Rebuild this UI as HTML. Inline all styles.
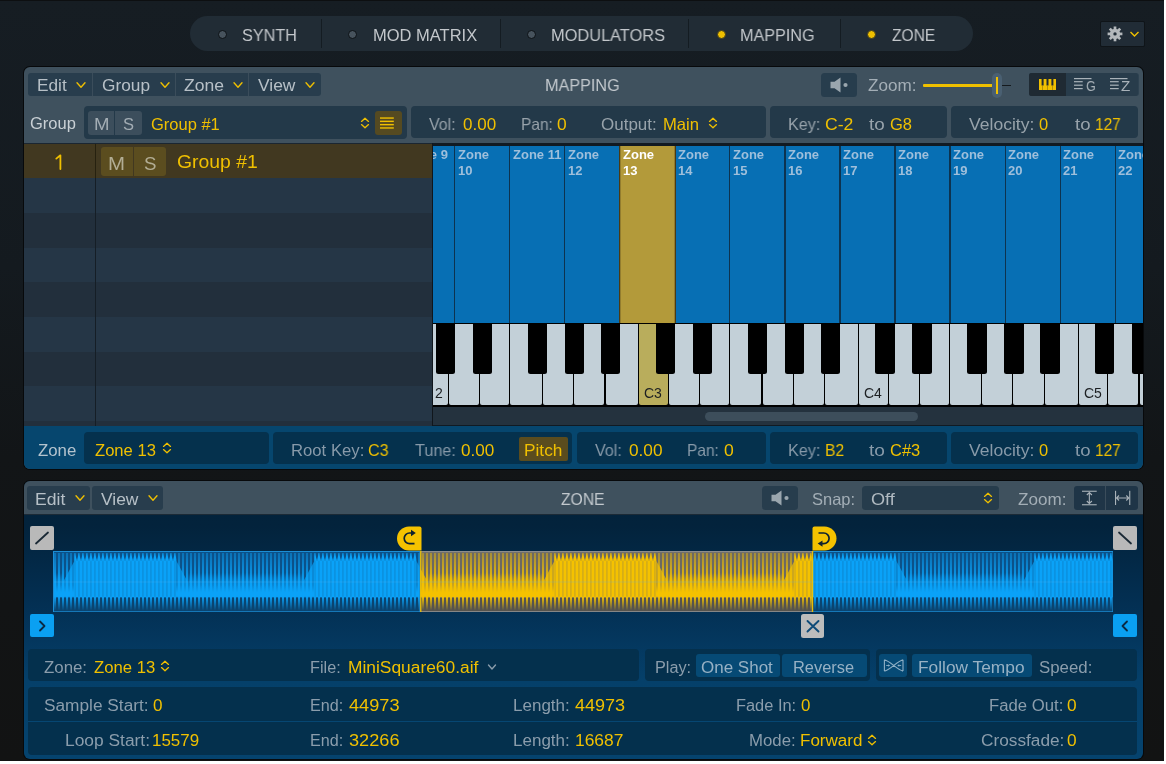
<!DOCTYPE html>
<html><head><meta charset="utf-8"><style>
html,body{margin:0;padding:0;}
body{width:1166px;height:764px;position:relative;overflow:hidden;background:#131313;font-family:"Liberation Sans",sans-serif;}
.t{position:absolute;white-space:nowrap;will-change:transform;}
</style></head><body>
<div style="position:absolute;left:0;top:0;width:1164px;height:761px;background:linear-gradient(180deg,#161d23 0%,#141a1f 35%,#121517 60%,#121313 100%)"></div>
<div style="position:absolute;left:0.00px;top:0.00px;width:1164.00px;height:1.00px;background:#0d0f11;border-radius:0px;"></div>
<div style="position:absolute;left:190.00px;top:16.00px;width:783.00px;height:35.00px;background:#212c35;border-radius:17.5px;"></div>
<div style="position:absolute;left:321.00px;top:19.00px;width:1.00px;height:29.00px;background:#141c22;border-radius:0px;"></div>
<div style="position:absolute;left:500.00px;top:19.00px;width:1.00px;height:29.00px;background:#141c22;border-radius:0px;"></div>
<div style="position:absolute;left:688.00px;top:19.00px;width:1.00px;height:29.00px;background:#141c22;border-radius:0px;"></div>
<div style="position:absolute;left:840.00px;top:19.00px;width:1.00px;height:29.00px;background:#141c22;border-radius:0px;"></div>
<div style="position:absolute;left:218.0px;top:29.5px;width:9px;height:9px;border-radius:50%;background:#47535d;box-sizing:border-box;border:1px solid #0c1115"></div>
<div style="position:absolute;left:348.1px;top:29.5px;width:9px;height:9px;border-radius:50%;background:#47535d;box-sizing:border-box;border:1px solid #0c1115"></div>
<div style="position:absolute;left:526.5px;top:29.5px;width:9px;height:9px;border-radius:50%;background:#47535d;box-sizing:border-box;border:1px solid #0c1115"></div>
<div style="position:absolute;left:716.5px;top:29.5px;width:9px;height:9px;border-radius:50%;background:#f0c000;box-sizing:border-box;border:1px solid #3a3a20"></div>
<div style="position:absolute;left:866.5px;top:29.5px;width:9px;height:9px;border-radius:50%;background:#f0c000;box-sizing:border-box;border:1px solid #3a3a20"></div>
<div class="t" style="left:241.70px;top:27.00px;font-size:16.5px;line-height:16.5px;color:#c3c7cb;font-weight:400;transform:scaleX(0.9821);transform-origin:0 0;">SYNTH</div>
<div class="t" style="left:373.00px;top:27.00px;font-size:16.5px;line-height:16.5px;color:#c3c7cb;font-weight:400;">MOD MATRIX</div>
<div class="t" style="left:551.00px;top:27.00px;font-size:16.5px;line-height:16.5px;color:#c3c7cb;font-weight:400;transform:scaleX(0.9922);transform-origin:0 0;">MODULATORS</div>
<div class="t" style="left:740.00px;top:27.00px;font-size:16.5px;line-height:16.5px;color:#c3c7cb;font-weight:400;transform:scaleX(0.9803);transform-origin:0 0;">MAPPING</div>
<div class="t" style="left:891.70px;top:27.00px;font-size:16.5px;line-height:16.5px;color:#c3c7cb;font-weight:400;transform:scaleX(0.9444);transform-origin:0 0;">ZONE</div>
<div style="position:absolute;left:1100.00px;top:21.00px;width:45.00px;height:26.00px;background:#0f1418;border-radius:2px;"></div>
<div style="position:absolute;left:1101.00px;top:22.00px;width:43.00px;height:24.00px;background:#212c36;border-radius:1px;"></div>
<svg style="position:absolute;left:1105.0px;top:23.5px;" width="20" height="20" viewBox="0 0 20 20"><g transform="translate(10,9.9)" fill="#b4b8bc"><circle r="5.2"/><rect x="-1.35" y="-7.4" width="2.7" height="4" transform="rotate(0)"/><rect x="-1.35" y="-7.4" width="2.7" height="4" transform="rotate(45)"/><rect x="-1.35" y="-7.4" width="2.7" height="4" transform="rotate(90)"/><rect x="-1.35" y="-7.4" width="2.7" height="4" transform="rotate(135)"/><rect x="-1.35" y="-7.4" width="2.7" height="4" transform="rotate(180)"/><rect x="-1.35" y="-7.4" width="2.7" height="4" transform="rotate(225)"/><rect x="-1.35" y="-7.4" width="2.7" height="4" transform="rotate(270)"/><rect x="-1.35" y="-7.4" width="2.7" height="4" transform="rotate(315)"/></g><circle cx="10" cy="9.9" r="1.7" fill="#212c36"/></svg>
<svg style="position:absolute;left:1128.0px;top:28.0px;" width="14" height="12" viewBox="0 0 14 12"><path d="M2.5 4 L6.5 8 L10.5 4" stroke="#f0c000" stroke-width="1.4" fill="none"/></svg>
<div style="position:absolute;left:23.00px;top:66.00px;width:1121.00px;height:403.50px;background:#07090b;border-radius:7px;"></div>
<div style="position:absolute;left:24.00px;top:67.00px;width:1119.00px;height:401.50px;background:#3f515e;border-radius:6px;overflow:hidden"></div>
<div style="position:absolute;left:28.00px;top:73.00px;width:292.50px;height:23.00px;background:#283d4d;border-radius:3px;"></div>
<div style="position:absolute;left:92.00px;top:73.00px;width:1.00px;height:23.00px;background:#3b4d5b;border-radius:0px;"></div>
<div style="position:absolute;left:174.50px;top:73.00px;width:1.00px;height:23.00px;background:#3b4d5b;border-radius:0px;"></div>
<div style="position:absolute;left:247.50px;top:73.00px;width:1.00px;height:23.00px;background:#3b4d5b;border-radius:0px;"></div>
<div class="t" style="left:36.80px;top:77.00px;font-size:17px;line-height:17px;color:#b7c0c7;font-weight:400;transform:scaleX(1.0137);transform-origin:0 0;">Edit</div>
<div class="t" style="left:102.00px;top:77.00px;font-size:17px;line-height:17px;color:#b7c0c7;font-weight:400;transform:scaleX(1.0159);transform-origin:0 0;">Group</div>
<div class="t" style="left:184.00px;top:77.00px;font-size:17px;line-height:17px;color:#b7c0c7;font-weight:400;transform:scaleX(1.0323);transform-origin:0 0;">Zone</div>
<div class="t" style="left:257.50px;top:77.00px;font-size:17px;line-height:17px;color:#b7c0c7;font-weight:400;transform:scaleX(1.0246);transform-origin:0 0;">View</div>
<svg style="position:absolute;left:75.0px;top:80.0px;" width="12" height="10" viewBox="0 0 12 10"><path d="M2.0 2.75 L6 7.25 L10.0 2.75" stroke="#f0c000" stroke-width="1.35" fill="none" stroke-linecap="round" stroke-linejoin="round"/></svg>
<svg style="position:absolute;left:158.5px;top:80.0px;" width="12" height="10" viewBox="0 0 12 10"><path d="M2.0 2.75 L6 7.25 L10.0 2.75" stroke="#f0c000" stroke-width="1.35" fill="none" stroke-linecap="round" stroke-linejoin="round"/></svg>
<svg style="position:absolute;left:232.0px;top:80.0px;" width="12" height="10" viewBox="0 0 12 10"><path d="M2.0 2.75 L6 7.25 L10.0 2.75" stroke="#f0c000" stroke-width="1.35" fill="none" stroke-linecap="round" stroke-linejoin="round"/></svg>
<svg style="position:absolute;left:304.0px;top:80.0px;" width="12" height="10" viewBox="0 0 12 10"><path d="M2.0 2.75 L6 7.25 L10.0 2.75" stroke="#f0c000" stroke-width="1.35" fill="none" stroke-linecap="round" stroke-linejoin="round"/></svg>
<div class="t" style="left:545.30px;top:77.00px;font-size:16.5px;line-height:16.5px;color:#c3c9ce;font-weight:400;transform:scaleX(0.9816);transform-origin:0 0;">MAPPING</div>
<div style="position:absolute;left:821.00px;top:72.50px;width:35.50px;height:24.00px;background:#273d4d;border-radius:3.5px;"></div>
<svg style="position:absolute;left:828.5px;top:76.5px;" width="20" height="16" viewBox="0 0 20 16"><path d="M1.5 4.8 H5.5 L11.5 0.5 V15.5 L5.5 11.2 H1.5 Z" fill="#9aa6ae"/><circle cx="16.5" cy="8" r="2.1" fill="#9aa6ae"/></svg>
<div class="t" style="left:868.30px;top:77.00px;font-size:16.5px;line-height:16.5px;color:#a3aeb6;font-weight:400;transform:scaleX(1.0353);transform-origin:0 0;">Zoom:</div>
<div style="position:absolute;left:923.00px;top:84.30px;width:74.00px;height:2.50px;background:#f0c000;border-radius:1px;"></div>
<div style="position:absolute;left:997.00px;top:84.90px;width:14.00px;height:1.30px;background:#151a1e;border-radius:0px;"></div>
<div style="position:absolute;left:991.50px;top:73.00px;width:10.50px;height:25.00px;background:#4a6072;border-radius:5px;"></div>
<div style="position:absolute;left:995.80px;top:76.50px;width:2.00px;height:17.50px;background:#f0c000;border-radius:0px;"></div>
<div style="position:absolute;left:1029.00px;top:72.50px;width:110.00px;height:23.50px;background:#2e4251;border-radius:3px;"></div>
<div style="position:absolute;left:1029.00px;top:72.50px;width:36.50px;height:23.50px;background:#1f2a33;border-radius:3px;"></div>
<div style="position:absolute;left:1065.00px;top:72.50px;width:1.00px;height:23.50px;background:#263543;border-radius:0px;"></div>
<div style="position:absolute;left:1101.50px;top:72.50px;width:1.00px;height:23.50px;background:#3b4d5b;border-radius:0px;"></div>
<div style="position:absolute;left:1029.00px;top:72.50px;width:109.00px;height:23.50px;background:#283c4b;border-radius:3px;"></div>
<div style="position:absolute;left:1029.00px;top:72.50px;width:37.00px;height:23.50px;background:#1f2a33;border-radius:3px;border-top-right-radius:0;border-bottom-right-radius:0"></div>
<svg style="position:absolute;left:1039.0px;top:79.0px;" width="17" height="11" viewBox="0 0 17 11"><rect x="0" y="0" width="17" height="11" fill="#f0c000"/><rect x="2.6" y="0" width="2" height="6.5" fill="#1f2a33"/><rect x="7.5" y="0" width="2" height="6.5" fill="#1f2a33"/><rect x="12.4" y="0" width="2" height="6.5" fill="#1f2a33"/><rect x="3.4" y="6.5" width="0.6" height="4.5" fill="#8a7410"/><rect x="8.2" y="6.5" width="0.6" height="4.5" fill="#8a7410"/><rect x="13.1" y="6.5" width="0.6" height="4.5" fill="#8a7410"/></svg>
<svg style="position:absolute;left:1073.9px;top:77.7px;" width="20" height="12" viewBox="0 0 20 12"><rect x="0" y="0" width="17.5" height="1.2" fill="#a9b2b9"/><rect x="0" y="3.1" width="8.7" height="1.2" fill="#a9b2b9"/><rect x="0" y="6.6" width="8.7" height="1.2" fill="#a9b2b9"/><rect x="0" y="10" width="8.7" height="1.2" fill="#a9b2b9"/></svg>
<div class="t" style="left:1085.50px;top:79.00px;font-size:14px;line-height:14px;color:#a9b2b9;font-weight:400;transform:scaleX(0.8991);transform-origin:0 0;">G</div>
<svg style="position:absolute;left:1109.9px;top:77.7px;" width="20" height="12" viewBox="0 0 20 12"><rect x="0" y="0" width="17.5" height="1.2" fill="#a9b2b9"/><rect x="0" y="3.1" width="8.7" height="1.2" fill="#a9b2b9"/><rect x="0" y="6.6" width="8.7" height="1.2" fill="#a9b2b9"/><rect x="0" y="10" width="8.7" height="1.2" fill="#a9b2b9"/></svg>
<div class="t" style="left:1120.70px;top:79.00px;font-size:14px;line-height:14px;color:#a9b2b9;font-weight:400;transform:scaleX(1.0877);transform-origin:0 0;">Z</div>
<div class="t" style="left:30.00px;top:115.00px;font-size:16.5px;line-height:16.5px;color:#c9d0d5;font-weight:400;">Group</div>
<div style="position:absolute;left:84.00px;top:106.00px;width:323.00px;height:32.60px;background:#233949;border-radius:4px;"></div>
<div style="position:absolute;left:88.00px;top:111.00px;width:26.00px;height:24.00px;background:#3c4e5c;border-radius:3px;border-top-right-radius:0;border-bottom-right-radius:0"></div>
<div style="position:absolute;left:115.00px;top:111.00px;width:27.00px;height:24.00px;background:#3c4e5c;border-radius:3px;border-top-left-radius:0;border-bottom-left-radius:0"></div>
<div class="t" style="left:93.50px;top:116.00px;font-size:16.5px;line-height:16.5px;color:#a3adb4;font-weight:400;transform:scaleX(1.1273);transform-origin:0 0;">M</div>
<div class="t" style="left:123.00px;top:116.00px;font-size:16.5px;line-height:16.5px;color:#a3adb4;font-weight:400;">S</div>
<div class="t" style="left:151.00px;top:116.00px;font-size:16.5px;line-height:16.5px;color:#f0c000;font-weight:400;">Group #1</div>
<svg style="position:absolute;left:358.7px;top:115.0px;" width="12" height="16" viewBox="0 0 12 16"><path d="M2.5 6.4 L6 3.2 L9.5 6.4 M2.5 9.6 L6 12.8 L9.5 9.6" stroke="#f0c000" stroke-width="1.3" fill="none" stroke-linecap="round" stroke-linejoin="round"/></svg>
<div style="position:absolute;left:375.30px;top:110.80px;width:26.70px;height:24.00px;background:#554a21;border-radius:3px;"></div>
<svg style="position:absolute;left:380.2px;top:116.0px;" width="14" height="14" viewBox="0 0 14 14"><rect x="0" y="1.35" width="13.8" height="1.4" fill="#f0c000"/><rect x="0" y="4.65" width="13.8" height="1.4" fill="#f0c000"/><rect x="0" y="7.95" width="13.8" height="1.4" fill="#f0c000"/><rect x="0" y="11.25" width="13.8" height="1.4" fill="#f0c000"/></svg>
<div style="position:absolute;left:411.00px;top:106.00px;width:355.00px;height:32.20px;background:#233949;border-radius:4px;"></div>
<div class="t" style="left:428.90px;top:116.00px;font-size:16.5px;line-height:16.5px;color:#98a3ab;font-weight:400;transform:scaleX(0.9673);transform-origin:0 0;">Vol:</div>
<div class="t" style="left:462.50px;top:116.00px;font-size:16.5px;line-height:16.5px;color:#f0c000;font-weight:400;transform:scaleX(1.0312);transform-origin:0 0;">0.00</div>
<div class="t" style="left:520.60px;top:116.00px;font-size:16.5px;line-height:16.5px;color:#98a3ab;font-weight:400;transform:scaleX(0.9396);transform-origin:0 0;">Pan:</div>
<div class="t" style="left:557.30px;top:116.00px;font-size:16.5px;line-height:16.5px;color:#f0c000;font-weight:400;transform:scaleX(1.0543);transform-origin:0 0;">0</div>
<div class="t" style="left:600.80px;top:116.00px;font-size:16.5px;line-height:16.5px;color:#98a3ab;font-weight:400;transform:scaleX(1.0296);transform-origin:0 0;">Output:</div>
<div class="t" style="left:663.00px;top:116.00px;font-size:16.5px;line-height:16.5px;color:#f0c000;font-weight:400;transform:scaleX(1.0070);transform-origin:0 0;">Main</div>
<svg style="position:absolute;left:707.0px;top:115.0px;" width="12" height="16" viewBox="0 0 12 16"><path d="M2.5 6.4 L6 3.2 L9.5 6.4 M2.5 9.6 L6 12.8 L9.5 9.6" stroke="#f0c000" stroke-width="1.3" fill="none" stroke-linecap="round" stroke-linejoin="round"/></svg>
<div style="position:absolute;left:770.00px;top:106.00px;width:177.00px;height:32.20px;background:#233949;border-radius:4px;"></div>
<div class="t" style="left:787.80px;top:116.00px;font-size:16.5px;line-height:16.5px;color:#98a3ab;font-weight:400;transform:scaleX(0.9758);transform-origin:0 0;">Key:</div>
<div class="t" style="left:825.00px;top:116.00px;font-size:16.5px;line-height:16.5px;color:#f0c000;font-weight:400;transform:scaleX(1.0677);transform-origin:0 0;">C-2</div>
<div class="t" style="left:868.80px;top:116.00px;font-size:16.5px;line-height:16.5px;color:#98a3ab;font-weight:400;transform:scaleX(1.1418);transform-origin:0 0;">to</div>
<div class="t" style="left:890.40px;top:116.00px;font-size:16.5px;line-height:16.5px;color:#f0c000;font-weight:400;transform:scaleX(0.9818);transform-origin:0 0;">G8</div>
<div style="position:absolute;left:951.00px;top:106.00px;width:187.20px;height:32.20px;background:#233949;border-radius:4px;"></div>
<div class="t" style="left:968.70px;top:116.00px;font-size:16.5px;line-height:16.5px;color:#98a3ab;font-weight:400;transform:scaleX(1.0627);transform-origin:0 0;">Velocity:</div>
<div class="t" style="left:1039.30px;top:116.00px;font-size:16.5px;line-height:16.5px;color:#f0c000;font-weight:400;">0</div>
<div class="t" style="left:1075.00px;top:116.00px;font-size:16.5px;line-height:16.5px;color:#98a3ab;font-weight:400;transform:scaleX(1.1273);transform-origin:0 0;">to</div>
<div class="t" style="left:1095.00px;top:116.00px;font-size:16.5px;line-height:16.5px;color:#f0c000;font-weight:400;transform:scaleX(0.9365);transform-origin:0 0;">127</div>
<div style="position:absolute;left:24.00px;top:143.00px;width:1119.00px;height:1.00px;background:#1b2631;border-radius:0px;"></div>
<div style="position:absolute;left:24.00px;top:177.50px;width:408.50px;height:35.00px;background:#253646;border-radius:0px;"></div>
<div style="position:absolute;left:24.00px;top:212.50px;width:408.50px;height:35.10px;background:#222f3c;border-radius:0px;"></div>
<div style="position:absolute;left:24.00px;top:247.60px;width:408.50px;height:34.60px;background:#253646;border-radius:0px;"></div>
<div style="position:absolute;left:24.00px;top:282.20px;width:408.50px;height:34.80px;background:#222f3c;border-radius:0px;"></div>
<div style="position:absolute;left:24.00px;top:317.00px;width:408.50px;height:35.00px;background:#253646;border-radius:0px;"></div>
<div style="position:absolute;left:24.00px;top:352.00px;width:408.50px;height:34.00px;background:#222f3c;border-radius:0px;"></div>
<div style="position:absolute;left:24.00px;top:386.00px;width:408.50px;height:35.00px;background:#253646;border-radius:0px;"></div>
<div style="position:absolute;left:24.00px;top:421.00px;width:408.50px;height:5.00px;background:#222f3c;border-radius:0px;"></div>
<div style="position:absolute;left:24.00px;top:144.00px;width:408.50px;height:33.50px;background:#413820;border-radius:0px;"></div>
<div style="position:absolute;left:95.00px;top:144.00px;width:1.20px;height:282.00px;background:#151e26;border-radius:0px;"></div>
<div style="position:absolute;left:95.00px;top:144.00px;width:1.20px;height:33.50px;background:#26210f;border-radius:0px;"></div>
<svg style="position:absolute;left:50.0px;top:150.0px;" width="20" height="22" viewBox="0 0 20 22"><path d="M10.4 19 V5.3 L6.3 8.6" stroke="#f0c000" stroke-width="1.8" fill="none" stroke-linejoin="round" stroke-linecap="round"/></svg>
<div style="position:absolute;left:101.00px;top:147.40px;width:32.00px;height:28.60px;background:#5b4d1f;border-radius:3px;border-top-right-radius:0;border-bottom-right-radius:0"></div>
<div style="position:absolute;left:134.00px;top:147.40px;width:32.00px;height:28.60px;background:#5b4d1f;border-radius:3px;border-top-left-radius:0;border-bottom-left-radius:0"></div>
<div class="t" style="left:107.50px;top:155.00px;font-size:18.5px;line-height:18.5px;color:#b2ad94;font-weight:400;transform:scaleX(1.1039);transform-origin:0 0;">M</div>
<div class="t" style="left:144.00px;top:155.00px;font-size:18.5px;line-height:18.5px;color:#b2ad94;font-weight:400;transform:scaleX(1.0121);transform-origin:0 0;">S</div>
<div class="t" style="left:176.70px;top:153.00px;font-size:18.5px;line-height:18.5px;color:#f0c000;font-weight:400;transform:scaleX(1.0473);transform-origin:0 0;">Group #1</div>
<div style="position:absolute;left:432.50px;top:143.00px;width:710.50px;height:283.00px;background:#111a22;border-radius:0px;"></div>
<div style="position:absolute;left:432.50px;top:145.50px;width:710.50px;height:177.10px;overflow:hidden;"><div style="position:absolute;left:0.00px;top:0.00px;width:710.50px;height:177.10px;background:#076fb4;border-radius:0px;"></div><div style="position:absolute;left:21.80px;top:0.00px;width:1.10px;height:177.10px;background:#0d3350;border-radius:0px;"></div><div style="position:absolute;left:76.82px;top:0.00px;width:1.10px;height:177.10px;background:#0d3350;border-radius:0px;"></div><div style="position:absolute;left:131.84px;top:0.00px;width:1.10px;height:177.10px;background:#0d3350;border-radius:0px;"></div><div style="position:absolute;left:186.86px;top:0.00px;width:1.10px;height:177.10px;background:#0d3350;border-radius:0px;"></div><div style="position:absolute;left:241.88px;top:0.00px;width:1.10px;height:177.10px;background:#0d3350;border-radius:0px;"></div><div style="position:absolute;left:296.90px;top:0.00px;width:1.10px;height:177.10px;background:#0d3350;border-radius:0px;"></div><div style="position:absolute;left:351.92px;top:0.00px;width:1.10px;height:177.10px;background:#0d3350;border-radius:0px;"></div><div style="position:absolute;left:406.94px;top:0.00px;width:1.10px;height:177.10px;background:#0d3350;border-radius:0px;"></div><div style="position:absolute;left:461.96px;top:0.00px;width:1.10px;height:177.10px;background:#0d3350;border-radius:0px;"></div><div style="position:absolute;left:516.98px;top:0.00px;width:1.10px;height:177.10px;background:#0d3350;border-radius:0px;"></div><div style="position:absolute;left:572.00px;top:0.00px;width:1.10px;height:177.10px;background:#0d3350;border-radius:0px;"></div><div style="position:absolute;left:627.02px;top:0.00px;width:1.10px;height:177.10px;background:#0d3350;border-radius:0px;"></div><div style="position:absolute;left:682.04px;top:0.00px;width:1.10px;height:177.10px;background:#0d3350;border-radius:0px;"></div><div style="position:absolute;left:186.76px;top:0.00px;width:56.32px;height:177.10px;background:#b39a3a;border-radius:0px;box-shadow:inset 1.3px 0 0 #4a3a14, inset -1.3px 0 0 #4a3a14"></div><div class="t" style="left:-26.30px;top:2.50px;font-size:13px;line-height:13px;color:#9fbfdb;font-weight:700;">Zone 9</div><div class="t" style="left:25.60px;top:2.50px;font-size:13px;line-height:13px;color:#9fbfdb;font-weight:700;">Zone</div><div class="t" style="left:25.60px;top:18.50px;font-size:13px;line-height:13px;color:#9fbfdb;font-weight:700;">10</div><div class="t" style="left:80.62px;top:2.50px;font-size:13px;line-height:13px;color:#9fbfdb;font-weight:700;">Zone 11</div><div class="t" style="left:135.64px;top:2.50px;font-size:13px;line-height:13px;color:#9fbfdb;font-weight:700;">Zone</div><div class="t" style="left:135.64px;top:18.50px;font-size:13px;line-height:13px;color:#9fbfdb;font-weight:700;">12</div><div class="t" style="left:190.66px;top:2.50px;font-size:13px;line-height:13px;color:#ffffff;font-weight:700;">Zone</div><div class="t" style="left:190.66px;top:18.50px;font-size:13px;line-height:13px;color:#ffffff;font-weight:700;">13</div><div class="t" style="left:245.68px;top:2.50px;font-size:13px;line-height:13px;color:#9fbfdb;font-weight:700;">Zone</div><div class="t" style="left:245.68px;top:18.50px;font-size:13px;line-height:13px;color:#9fbfdb;font-weight:700;">14</div><div class="t" style="left:300.70px;top:2.50px;font-size:13px;line-height:13px;color:#9fbfdb;font-weight:700;">Zone</div><div class="t" style="left:300.70px;top:18.50px;font-size:13px;line-height:13px;color:#9fbfdb;font-weight:700;">15</div><div class="t" style="left:355.72px;top:2.50px;font-size:13px;line-height:13px;color:#9fbfdb;font-weight:700;">Zone</div><div class="t" style="left:355.72px;top:18.50px;font-size:13px;line-height:13px;color:#9fbfdb;font-weight:700;">16</div><div class="t" style="left:410.74px;top:2.50px;font-size:13px;line-height:13px;color:#9fbfdb;font-weight:700;">Zone</div><div class="t" style="left:410.74px;top:18.50px;font-size:13px;line-height:13px;color:#9fbfdb;font-weight:700;">17</div><div class="t" style="left:465.76px;top:2.50px;font-size:13px;line-height:13px;color:#9fbfdb;font-weight:700;">Zone</div><div class="t" style="left:465.76px;top:18.50px;font-size:13px;line-height:13px;color:#9fbfdb;font-weight:700;">18</div><div class="t" style="left:520.78px;top:2.50px;font-size:13px;line-height:13px;color:#9fbfdb;font-weight:700;">Zone</div><div class="t" style="left:520.78px;top:18.50px;font-size:13px;line-height:13px;color:#9fbfdb;font-weight:700;">19</div><div class="t" style="left:575.80px;top:2.50px;font-size:13px;line-height:13px;color:#9fbfdb;font-weight:700;">Zone</div><div class="t" style="left:575.80px;top:18.50px;font-size:13px;line-height:13px;color:#9fbfdb;font-weight:700;">20</div><div class="t" style="left:630.82px;top:2.50px;font-size:13px;line-height:13px;color:#9fbfdb;font-weight:700;">Zone</div><div class="t" style="left:630.82px;top:18.50px;font-size:13px;line-height:13px;color:#9fbfdb;font-weight:700;">21</div><div class="t" style="left:685.84px;top:2.50px;font-size:13px;line-height:13px;color:#9fbfdb;font-weight:700;">Zone</div><div class="t" style="left:685.84px;top:18.50px;font-size:13px;line-height:13px;color:#9fbfdb;font-weight:700;">22</div></div>
<div style="position:absolute;left:432.50px;top:322.60px;width:710.50px;height:84.20px;background:#000000;border-radius:0px;"></div>
<div style="position:absolute;left:432.50px;top:322.60px;width:710.50px;height:84.20px;overflow:hidden;"><div style="position:absolute;left:-12.90px;top:1.80px;width:28.50px;height:80.40px;background:#c3d0d8;border-radius:2px;border-top-left-radius:0;border-top-right-radius:0"></div><div style="position:absolute;left:16.60px;top:1.80px;width:30.30px;height:80.40px;background:#c3d0d8;border-radius:2px;border-top-left-radius:0;border-top-right-radius:0"></div><div style="position:absolute;left:47.90px;top:1.80px;width:29.00px;height:80.40px;background:#c3d0d8;border-radius:2px;border-top-left-radius:0;border-top-right-radius:0"></div><div style="position:absolute;left:77.90px;top:1.80px;width:31.40px;height:80.40px;background:#c3d0d8;border-radius:2px;border-top-left-radius:0;border-top-right-radius:0"></div><div style="position:absolute;left:110.30px;top:1.80px;width:30.10px;height:80.40px;background:#c3d0d8;border-radius:2px;border-top-left-radius:0;border-top-right-radius:0"></div><div style="position:absolute;left:141.40px;top:1.80px;width:30.60px;height:80.40px;background:#c3d0d8;border-radius:2px;border-top-left-radius:0;border-top-right-radius:0"></div><div style="position:absolute;left:173.00px;top:1.80px;width:32.80px;height:80.40px;background:#c3d0d8;border-radius:2px;border-top-left-radius:0;border-top-right-radius:0"></div><div style="position:absolute;left:206.80px;top:1.80px;width:28.50px;height:80.40px;background:#b9ad5c;border-radius:2px;border-top-left-radius:0;border-top-right-radius:0"></div><div style="position:absolute;left:236.30px;top:1.80px;width:30.30px;height:80.40px;background:#c3d0d8;border-radius:2px;border-top-left-radius:0;border-top-right-radius:0"></div><div style="position:absolute;left:267.60px;top:1.80px;width:29.00px;height:80.40px;background:#c3d0d8;border-radius:2px;border-top-left-radius:0;border-top-right-radius:0"></div><div style="position:absolute;left:297.60px;top:1.80px;width:31.40px;height:80.40px;background:#c3d0d8;border-radius:2px;border-top-left-radius:0;border-top-right-radius:0"></div><div style="position:absolute;left:330.00px;top:1.80px;width:30.10px;height:80.40px;background:#c3d0d8;border-radius:2px;border-top-left-radius:0;border-top-right-radius:0"></div><div style="position:absolute;left:361.10px;top:1.80px;width:30.60px;height:80.40px;background:#c3d0d8;border-radius:2px;border-top-left-radius:0;border-top-right-radius:0"></div><div style="position:absolute;left:392.70px;top:1.80px;width:32.80px;height:80.40px;background:#c3d0d8;border-radius:2px;border-top-left-radius:0;border-top-right-radius:0"></div><div style="position:absolute;left:426.50px;top:1.80px;width:28.50px;height:80.40px;background:#c3d0d8;border-radius:2px;border-top-left-radius:0;border-top-right-radius:0"></div><div style="position:absolute;left:456.00px;top:1.80px;width:30.30px;height:80.40px;background:#c3d0d8;border-radius:2px;border-top-left-radius:0;border-top-right-radius:0"></div><div style="position:absolute;left:487.30px;top:1.80px;width:29.00px;height:80.40px;background:#c3d0d8;border-radius:2px;border-top-left-radius:0;border-top-right-radius:0"></div><div style="position:absolute;left:517.30px;top:1.80px;width:31.40px;height:80.40px;background:#c3d0d8;border-radius:2px;border-top-left-radius:0;border-top-right-radius:0"></div><div style="position:absolute;left:549.70px;top:1.80px;width:30.10px;height:80.40px;background:#c3d0d8;border-radius:2px;border-top-left-radius:0;border-top-right-radius:0"></div><div style="position:absolute;left:580.80px;top:1.80px;width:30.60px;height:80.40px;background:#c3d0d8;border-radius:2px;border-top-left-radius:0;border-top-right-radius:0"></div><div style="position:absolute;left:612.40px;top:1.80px;width:32.80px;height:80.40px;background:#c3d0d8;border-radius:2px;border-top-left-radius:0;border-top-right-radius:0"></div><div style="position:absolute;left:646.20px;top:1.80px;width:28.50px;height:80.40px;background:#c3d0d8;border-radius:2px;border-top-left-radius:0;border-top-right-radius:0"></div><div style="position:absolute;left:675.70px;top:1.80px;width:30.30px;height:80.40px;background:#c3d0d8;border-radius:2px;border-top-left-radius:0;border-top-right-radius:0"></div><div style="position:absolute;left:707.00px;top:1.80px;width:29.00px;height:80.40px;background:#c3d0d8;border-radius:2px;border-top-left-radius:0;border-top-right-radius:0"></div><div style="position:absolute;left:3.30px;top:0.00px;width:19.60px;height:51.40px;background:#000000;border-radius:2.5px;border-top-left-radius:0;border-top-right-radius:0"></div><div style="position:absolute;left:40.30px;top:0.00px;width:19.60px;height:51.40px;background:#000000;border-radius:2.5px;border-top-left-radius:0;border-top-right-radius:0"></div><div style="position:absolute;left:95.30px;top:0.00px;width:19.60px;height:51.40px;background:#000000;border-radius:2.5px;border-top-left-radius:0;border-top-right-radius:0"></div><div style="position:absolute;left:132.30px;top:0.00px;width:19.60px;height:51.40px;background:#000000;border-radius:2.5px;border-top-left-radius:0;border-top-right-radius:0"></div><div style="position:absolute;left:168.30px;top:0.00px;width:19.60px;height:51.40px;background:#000000;border-radius:2.5px;border-top-left-radius:0;border-top-right-radius:0"></div><div style="position:absolute;left:223.00px;top:0.00px;width:19.60px;height:51.40px;background:#000000;border-radius:2.5px;border-top-left-radius:0;border-top-right-radius:0"></div><div style="position:absolute;left:260.00px;top:0.00px;width:19.60px;height:51.40px;background:#000000;border-radius:2.5px;border-top-left-radius:0;border-top-right-radius:0"></div><div style="position:absolute;left:315.00px;top:0.00px;width:19.60px;height:51.40px;background:#000000;border-radius:2.5px;border-top-left-radius:0;border-top-right-radius:0"></div><div style="position:absolute;left:352.00px;top:0.00px;width:19.60px;height:51.40px;background:#000000;border-radius:2.5px;border-top-left-radius:0;border-top-right-radius:0"></div><div style="position:absolute;left:388.00px;top:0.00px;width:19.60px;height:51.40px;background:#000000;border-radius:2.5px;border-top-left-radius:0;border-top-right-radius:0"></div><div style="position:absolute;left:442.70px;top:0.00px;width:19.60px;height:51.40px;background:#000000;border-radius:2.5px;border-top-left-radius:0;border-top-right-radius:0"></div><div style="position:absolute;left:479.70px;top:0.00px;width:19.60px;height:51.40px;background:#000000;border-radius:2.5px;border-top-left-radius:0;border-top-right-radius:0"></div><div style="position:absolute;left:534.70px;top:0.00px;width:19.60px;height:51.40px;background:#000000;border-radius:2.5px;border-top-left-radius:0;border-top-right-radius:0"></div><div style="position:absolute;left:571.70px;top:0.00px;width:19.60px;height:51.40px;background:#000000;border-radius:2.5px;border-top-left-radius:0;border-top-right-radius:0"></div><div style="position:absolute;left:607.70px;top:0.00px;width:19.60px;height:51.40px;background:#000000;border-radius:2.5px;border-top-left-radius:0;border-top-right-radius:0"></div><div style="position:absolute;left:662.40px;top:0.00px;width:19.60px;height:51.40px;background:#000000;border-radius:2.5px;border-top-left-radius:0;border-top-right-radius:0"></div><div style="position:absolute;left:699.40px;top:0.00px;width:19.60px;height:51.40px;background:#000000;border-radius:2.5px;border-top-left-radius:0;border-top-right-radius:0"></div><div class="t" style="left:2.40px;top:63.40px;font-size:14px;line-height:14px;color:#1c1f22;font-weight:400;">2</div><div class="t" style="left:211.80px;top:63.40px;font-size:14px;line-height:14px;color:#1c1f22;font-weight:400;">C3</div><div class="t" style="left:431.50px;top:63.40px;font-size:14px;line-height:14px;color:#1c1f22;font-weight:400;">C4</div><div class="t" style="left:651.20px;top:63.40px;font-size:14px;line-height:14px;color:#1c1f22;font-weight:400;">C5</div></div>
<div style="position:absolute;left:431.80px;top:143.00px;width:1.40px;height:283.00px;background:#10161c;border-radius:0px;"></div>
<div style="position:absolute;left:432.50px;top:406.80px;width:710.50px;height:18.70px;background:#24323e;border-radius:0px;"></div>
<div style="position:absolute;left:704.60px;top:411.70px;width:213.70px;height:9.50px;background:#3d4e5b;border-radius:5px;"></div>
<div style="position:absolute;left:24.00px;top:425.50px;width:1119.00px;height:43.00px;overflow:hidden;border-bottom-left-radius:6px;border-bottom-right-radius:6px"><div style="position:absolute;left:0.00px;top:0.00px;width:1119.00px;height:43.00px;background:#06466e;border-radius:0px;"></div><div style="position:absolute;left:60.40px;top:6.10px;width:184.60px;height:32.40px;background:#05314d;border-radius:4px;"></div><div class="t" style="left:14.00px;top:16.50px;font-size:16.5px;line-height:16.5px;color:#b4c3ce;font-weight:400;transform:scaleX(1.0186);transform-origin:0 0;">Zone</div><div class="t" style="left:71.30px;top:16.50px;font-size:16.5px;line-height:16.5px;color:#f0c000;font-weight:400;transform:scaleX(1.0058);transform-origin:0 0;">Zone 13</div><svg style="position:absolute;left:136.6px;top:14.5px;" width="12" height="16" viewBox="0 0 12 16"><path d="M2.5 6.4 L6 3.2 L9.5 6.4 M2.5 9.6 L6 12.8 L9.5 9.6" stroke="#f0c000" stroke-width="1.3" fill="none" stroke-linecap="round" stroke-linejoin="round"/></svg><div style="position:absolute;left:249.20px;top:6.10px;width:298.60px;height:32.40px;background:#05314d;border-radius:4px;"></div><div class="t" style="left:266.50px;top:16.50px;font-size:16.5px;line-height:16.5px;color:#889aa9;font-weight:400;transform:scaleX(1.0117);transform-origin:0 0;">Root Key:</div><div class="t" style="left:344.00px;top:16.50px;font-size:16.5px;line-height:16.5px;color:#f0c000;font-weight:400;transform:scaleX(0.9716);transform-origin:0 0;">C3</div><div class="t" style="left:391.40px;top:16.50px;font-size:16.5px;line-height:16.5px;color:#889aa9;font-weight:400;transform:scaleX(0.9832);transform-origin:0 0;">Tune:</div><div class="t" style="left:436.70px;top:16.50px;font-size:16.5px;line-height:16.5px;color:#f0c000;font-weight:400;transform:scaleX(1.0374);transform-origin:0 0;">0.00</div><div style="position:absolute;left:494.80px;top:11.80px;width:48.90px;height:23.40px;background:#5a4c1e;border-radius:2px;"></div><div class="t" style="left:500.30px;top:16.50px;font-size:16.5px;line-height:16.5px;color:#f0c000;font-weight:400;transform:scaleX(1.0463);transform-origin:0 0;">Pitch</div><div style="position:absolute;left:552.90px;top:6.10px;width:188.80px;height:32.40px;background:#05314d;border-radius:4px;"></div><div class="t" style="left:571.20px;top:16.50px;font-size:16.5px;line-height:16.5px;color:#889aa9;font-weight:400;transform:scaleX(0.9745);transform-origin:0 0;">Vol:</div><div class="t" style="left:604.50px;top:16.50px;font-size:16.5px;line-height:16.5px;color:#f0c000;font-weight:400;transform:scaleX(1.0436);transform-origin:0 0;">0.00</div><div class="t" style="left:662.60px;top:16.50px;font-size:16.5px;line-height:16.5px;color:#889aa9;font-weight:400;transform:scaleX(0.9396);transform-origin:0 0;">Pan:</div><div class="t" style="left:700.20px;top:16.50px;font-size:16.5px;line-height:16.5px;color:#f0c000;font-weight:400;transform:scaleX(1.0652);transform-origin:0 0;">0</div><div style="position:absolute;left:746.30px;top:6.10px;width:176.90px;height:32.40px;background:#05314d;border-radius:4px;"></div><div class="t" style="left:764.20px;top:16.50px;font-size:16.5px;line-height:16.5px;color:#889aa9;font-weight:400;transform:scaleX(0.9788);transform-origin:0 0;">Key:</div><div class="t" style="left:801.20px;top:16.50px;font-size:16.5px;line-height:16.5px;color:#f0c000;font-weight:400;transform:scaleX(0.9505);transform-origin:0 0;">B2</div><div class="t" style="left:844.60px;top:16.50px;font-size:16.5px;line-height:16.5px;color:#889aa9;font-weight:400;transform:scaleX(1.1564);transform-origin:0 0;">to</div><div class="t" style="left:866.40px;top:16.50px;font-size:16.5px;line-height:16.5px;color:#f0c000;font-weight:400;">C#3</div><div style="position:absolute;left:927.00px;top:6.10px;width:187.20px;height:32.40px;background:#05314d;border-radius:4px;"></div><div class="t" style="left:944.70px;top:16.50px;font-size:16.5px;line-height:16.5px;color:#889aa9;font-weight:400;transform:scaleX(1.0627);transform-origin:0 0;">Velocity:</div><div class="t" style="left:1015.30px;top:16.50px;font-size:16.5px;line-height:16.5px;color:#f0c000;font-weight:400;">0</div><div class="t" style="left:1051.00px;top:16.50px;font-size:16.5px;line-height:16.5px;color:#889aa9;font-weight:400;transform:scaleX(1.1273);transform-origin:0 0;">to</div><div class="t" style="left:1071.00px;top:16.50px;font-size:16.5px;line-height:16.5px;color:#f0c000;font-weight:400;transform:scaleX(0.9365);transform-origin:0 0;">127</div></div>
<div style="position:absolute;left:23.00px;top:480.00px;width:1121.00px;height:279.80px;background:#07090b;border-radius:7px;"></div>
<div style="position:absolute;left:24.00px;top:481.00px;width:1119.00px;height:277.80px;overflow:hidden;border-radius:6px"><div style="position:absolute;left:0.00px;top:0.00px;width:1119.00px;height:277.80px;background:linear-gradient(180deg,#03223a 0px,#03233c 45px,#032f52 120px,#04375e 160px,#05406a 200px,#05436e 277px);border-radius:0px;"></div><div style="position:absolute;left:0.00px;top:0.00px;width:1119.00px;height:33.00px;background:#3f515e;border-radius:0px;"></div><div style="position:absolute;left:0.00px;top:33.00px;width:1119.00px;height:1.00px;background:#1c2a36;border-radius:0px;"></div><div style="position:absolute;left:3.00px;top:5.00px;width:63.20px;height:23.60px;background:#283d4d;border-radius:3px;"></div><div style="position:absolute;left:68.00px;top:5.00px;width:71.40px;height:23.60px;background:#283d4d;border-radius:3px;"></div><div class="t" style="left:11.00px;top:10.00px;font-size:17px;line-height:17px;color:#b7c0c7;font-weight:400;transform:scaleX(1.0341);transform-origin:0 0;">Edit</div><svg style="position:absolute;left:49.8px;top:12px;" width="12" height="10" viewBox="0 0 12 10"><path d="M2.0 2.75 L6 7.25 L10.0 2.75" stroke="#f0c000" stroke-width="1.35" fill="none" stroke-linecap="round" stroke-linejoin="round"/></svg><div class="t" style="left:76.80px;top:10.00px;font-size:17px;line-height:17px;color:#b7c0c7;font-weight:400;transform:scaleX(1.0246);transform-origin:0 0;">View</div><svg style="position:absolute;left:123.1px;top:12px;" width="12" height="10" viewBox="0 0 12 10"><path d="M2.0 2.75 L6 7.25 L10.0 2.75" stroke="#f0c000" stroke-width="1.35" fill="none" stroke-linecap="round" stroke-linejoin="round"/></svg><div class="t" style="left:537.40px;top:10.00px;font-size:16.5px;line-height:16.5px;color:#c3c9ce;font-weight:400;transform:scaleX(0.9509);transform-origin:0 0;">ZONE</div><div style="position:absolute;left:738.30px;top:4.70px;width:35.50px;height:24.30px;background:#273d4d;border-radius:3.5px;"></div><svg style="position:absolute;left:746.2px;top:8.800000000000011px;" width="20" height="16" viewBox="0 0 20 16"><path d="M1.5 4.8 H5.5 L11.5 0.5 V15.5 L5.5 11.2 H1.5 Z" fill="#9aa6ae"/><circle cx="16.5" cy="8" r="2.1" fill="#9aa6ae"/></svg><div class="t" style="left:788.20px;top:10.00px;font-size:16.5px;line-height:16.5px;color:#a3aeb6;font-weight:400;">Snap:</div><div style="position:absolute;left:837.80px;top:5.00px;width:137.70px;height:24.00px;background:#263c4c;border-radius:3.5px;"></div><div class="t" style="left:846.60px;top:10.00px;font-size:16.5px;line-height:16.5px;color:#b0bac1;font-weight:400;transform:scaleX(1.0989);transform-origin:0 0;">Off</div><svg style="position:absolute;left:957.6px;top:8.5px;" width="12" height="16" viewBox="0 0 12 16"><path d="M2.5 6.4 L6 3.2 L9.5 6.4 M2.5 9.6 L6 12.8 L9.5 9.6" stroke="#f0c000" stroke-width="1.3" fill="none" stroke-linecap="round" stroke-linejoin="round"/></svg><div class="t" style="left:993.60px;top:10.00px;font-size:16.5px;line-height:16.5px;color:#a3aeb6;font-weight:400;transform:scaleX(1.0353);transform-origin:0 0;">Zoom:</div><div style="position:absolute;left:1049.50px;top:5.00px;width:64.30px;height:23.60px;background:#1f3547;border-radius:3px;"></div><div style="position:absolute;left:1081.30px;top:5.00px;width:1.20px;height:23.60px;background:#3b4d5b;border-radius:0px;"></div><svg style="position:absolute;left:1055px;top:7px;" width="22" height="20" viewBox="0 0 22 20"><rect x="3" y="2.7" width="14.7" height="1.1" fill="#a9b2b9"/><rect x="3" y="16.2" width="14.7" height="1.1" fill="#a9b2b9"/><path d="M10.35 4.5 V15.5 M7.8 7.0 L10.35 4.5 L12.9 7.0 M7.8 13.0 L10.35 15.5 L12.9 13.0" stroke="#a9b2b9" stroke-width="1.1" fill="none"/></svg><svg style="position:absolute;left:1087px;top:7px;" width="22" height="20" viewBox="0 0 22 20"><rect x="4.0" y="2.8" width="1.1" height="14.2" fill="#a9b2b9"/><rect x="18.2" y="2.8" width="1.1" height="14.2" fill="#a9b2b9"/><path d="M5.5 10 H17.8 M8.0 7.5 L5.5 10 L8.0 12.5 M15.3 7.5 L17.8 10 L15.3 12.5" stroke="#a9b2b9" stroke-width="1.1" fill="none"/></svg><svg style="position:absolute;left:28.6px;top:70px;" width="1060.4" height="61.3" viewBox="0 0 1060.4 61.3"><defs><pattern id="spb" x="0" y="0" width="4.0" height="61.299999999999955" patternUnits="userSpaceOnUse"><path d="M1.6 2 L2.4 2 L3.0 34 L4.05 42 L4.05 46 L-0.05 46 L-0.05 42 L1.0 34 Z M1.0 46 L3.0 46 L2.0 59.299999999999955 Z" fill="#0aa2f8"/></pattern><pattern id="trb" x="0" y="0" width="4.0" height="61.299999999999955" patternUnits="userSpaceOnUse"><path d="M-0.1 10 L1.8 2 L4.1 10 Z" fill="#0aa2f8"/><rect x="1.5" y="10" width="0.9" height="36" fill="#0b5a90" opacity="0.45"/></pattern><pattern id="spy" x="0" y="0" width="4.0" height="61.299999999999955" patternUnits="userSpaceOnUse"><path d="M1.6 2 L2.4 2 L3.0 34 L4.05 42 L4.05 46 L-0.05 46 L-0.05 42 L1.0 34 Z M1.0 46 L3.0 46 L2.0 59.299999999999955 Z" fill="#f5c200"/></pattern><pattern id="try" x="0" y="0" width="4.0" height="61.299999999999955" patternUnits="userSpaceOnUse"><path d="M-0.1 10 L1.8 2 L4.1 10 Z" fill="#f5c200"/><rect x="1.5" y="10" width="0.9" height="36" fill="#6c6962" opacity="0.45"/></pattern><linearGradient id="lgb" x1="0" y1="0" x2="0" y2="1"><stop offset="0" stop-color="#0aa2f8" stop-opacity="0"/><stop offset="0.35" stop-color="#0aa2f8" stop-opacity="0.6"/><stop offset="0.75" stop-color="#0aa2f8" stop-opacity="0.75"/><stop offset="1" stop-color="#0aa2f8" stop-opacity="0.95"/></linearGradient><linearGradient id="lgy" x1="0" y1="0" x2="0" y2="1"><stop offset="0" stop-color="#f5c200" stop-opacity="0"/><stop offset="0.35" stop-color="#f5c200" stop-opacity="0.6"/><stop offset="0.75" stop-color="#f5c200" stop-opacity="0.75"/><stop offset="1" stop-color="#f5c200" stop-opacity="0.95"/></linearGradient></defs><rect x="0" y="0" width="366.90" height="61.299999999999955" fill="#0b5189"/><rect x="759.40" y="0" width="301.00" height="61.299999999999955" fill="#0b5189"/><rect x="366.90" y="0" width="392.50" height="61.299999999999955" fill="#6c6962"/><rect x="0" y="47" width="366.90" height="14.299999999999955" fill="#0a4470"/><rect x="759.40" y="47" width="301.00" height="14.299999999999955" fill="#0a4470"/><rect x="366.90" y="47" width="392.50" height="14.299999999999955" fill="#55534e"/><rect x="0" y="0" width="366.90" height="61.299999999999955" fill="url(#spb)"/><rect x="759.40" y="0" width="301.00" height="61.299999999999955" fill="url(#spb)"/><rect x="366.90" y="0" width="392.50" height="61.299999999999955" fill="url(#spy)"/><rect x="0.00" y="22" width="9.40" height="24" fill="url(#lgb)"/><rect x="21.40" y="10" width="102.00" height="36" fill="#0aa2f8"/><rect x="21.40" y="0" width="102.00" height="46" fill="url(#trb)"/><rect x="135.40" y="22" width="114.00" height="24" fill="url(#lgb)"/><rect x="261.40" y="10" width="102.00" height="36" fill="#0aa2f8"/><rect x="261.40" y="0" width="102.00" height="46" fill="url(#trb)"/><rect x="375.40" y="22" width="114.00" height="24" fill="url(#lgy)"/><rect x="501.40" y="10" width="102.00" height="36" fill="#f5c200"/><rect x="501.40" y="0" width="102.00" height="46" fill="url(#try)"/><rect x="615.40" y="22" width="114.00" height="24" fill="url(#lgy)"/><rect x="741.40" y="10" width="18.00" height="36" fill="#f5c200"/><rect x="741.40" y="0" width="18.00" height="46" fill="url(#try)"/><rect x="759.40" y="10" width="84.00" height="36" fill="#0aa2f8"/><rect x="759.40" y="0" width="84.00" height="46" fill="url(#trb)"/><rect x="855.40" y="22" width="114.00" height="24" fill="url(#lgb)"/><rect x="981.40" y="10" width="79.00" height="36" fill="#0aa2f8"/><rect x="981.40" y="0" width="79.00" height="46" fill="url(#trb)"/><polygon points="9.40,32.00 21.40,10.00 21.40,46 9.40,46" fill="#0aa2f8" opacity="0.7"/><polygon points="123.40,10.00 135.40,32.00 135.40,46 123.40,46" fill="#0aa2f8" opacity="0.7"/><polygon points="249.40,32.00 261.40,10.00 261.40,46 249.40,46" fill="#0aa2f8" opacity="0.7"/><polygon points="363.40,10.00 366.90,16.42 366.90,46 363.40,46" fill="#0aa2f8" opacity="0.7"/><polygon points="366.90,16.42 375.40,32.00 375.40,46 366.90,46" fill="#f5c200" opacity="0.7"/><polygon points="489.40,32.00 501.40,10.00 501.40,46 489.40,46" fill="#f5c200" opacity="0.7"/><polygon points="603.40,10.00 615.40,32.00 615.40,46 603.40,46" fill="#f5c200" opacity="0.7"/><polygon points="729.40,32.00 741.40,10.00 741.40,46 729.40,46" fill="#f5c200" opacity="0.7"/><polygon points="843.40,10.00 855.40,32.00 855.40,46 843.40,46" fill="#0aa2f8" opacity="0.7"/><polygon points="969.40,32.00 981.40,10.00 981.40,46 969.40,46" fill="#0aa2f8" opacity="0.7"/><rect x="0" y="30.5" width="1060.4" height="1" fill="#5fb8f0" opacity="0.25"/><rect x="0.5" y="0.5" width="366.40" height="60.299999999999955" fill="none" stroke="#1b8ed6" stroke-width="1"/><rect x="759.40" y="0.5" width="300.50" height="60.299999999999955" fill="none" stroke="#1b8ed6" stroke-width="1"/><rect x="366.90" y="0" width="392.50" height="1.2" fill="#8c8c8c"/><rect x="366.90" y="60.10" width="392.50" height="1.2" fill="#8c8c8c"/><rect x="367.10" y="0" width="1.3" height="61.299999999999955" fill="#f5c200"/><rect x="758.90" y="0" width="1.3" height="61.299999999999955" fill="#f5c200"/></svg><svg style="position:absolute;left:372.5px;top:44.5px;" width="25" height="25" viewBox="0 0 25 25"><path d="M12 0.5 H22.5 Q24.5 0.5 24.5 2.5 V24.5 H12 A12 12 0 0 1 12 0.5 Z" fill="#f5c200"/><path d="M17.5 17.6 H12.5 A5.3 5.3 0 0 1 12.5 7 H14.5" stroke="#0e2230" stroke-width="1.7" fill="none"/><path d="M14 3.8 L18.8 7 L14 10.2 Z" fill="#0e2230"/></svg><svg style="position:absolute;left:787.5px;top:44.5px;" width="25" height="25" viewBox="0 0 25 25"><path d="M12.5 0.5 H2.5 Q0.5 0.5 0.5 2.5 V24.5 H12.5 A12 12 0 0 0 12.5 0.5 Z" fill="#f5c200"/><path d="M6.5 7 H11.8 A5.3 5.3 0 0 1 11.8 17.6 H10" stroke="#0e2230" stroke-width="1.7" fill="none"/><path d="M10.5 14.4 L5.7 17.6 L10.5 20.8 Z" fill="#0e2230"/></svg><div style="position:absolute;left:6.30px;top:45.00px;width:23.50px;height:23.90px;background:#b9b9b9;border-radius:2px;"></div><svg style="position:absolute;left:6px;top:45px;" width="24" height="24" viewBox="0 0 24 24"><path d="M6 17.5 L18 6.5" stroke="#1b2a36" stroke-width="1.8" stroke-linecap="round"/></svg><div style="position:absolute;left:6.30px;top:133.10px;width:23.50px;height:23.30px;background:#0aa0f2;border-radius:2px;"></div><svg style="position:absolute;left:6px;top:133px;" width="24" height="24" viewBox="0 0 24 24"><path d="M10 7.5 L14.5 12 L10 16.5" stroke="#0a2a44" stroke-width="1.8" fill="none" stroke-linecap="round" stroke-linejoin="round"/></svg><div style="position:absolute;left:1089.00px;top:45.00px;width:24.00px;height:23.90px;background:#b9b9b9;border-radius:2px;"></div><svg style="position:absolute;left:1089px;top:45px;" width="24" height="24" viewBox="0 0 24 24"><path d="M6 6.5 L18 17.5" stroke="#1b2a36" stroke-width="1.8" stroke-linecap="round"/></svg><div style="position:absolute;left:1089.00px;top:133.10px;width:24.00px;height:23.30px;background:#0aa0f2;border-radius:2px;"></div><svg style="position:absolute;left:1089px;top:133px;" width="24" height="24" viewBox="0 0 24 24"><path d="M14 7.5 L9.5 12 L14 16.5" stroke="#0a2a44" stroke-width="1.8" fill="none" stroke-linecap="round" stroke-linejoin="round"/></svg><div style="position:absolute;left:776.50px;top:132.90px;width:23.80px;height:24.10px;background:#bcbcbc;border-radius:2.5px;"></div><svg style="position:absolute;left:776.5px;top:133px;" width="24" height="24" viewBox="0 0 24 24"><path d="M6.5 7 L17.5 17.5 M17.5 7 L6.5 17.5" stroke="#0d4a78" stroke-width="1.9" stroke-linecap="round"/></svg><div style="position:absolute;left:4.20px;top:167.50px;width:611.30px;height:32.20px;background:#04304d;border-radius:4px;"></div><div class="t" style="left:20.40px;top:179.00px;font-size:16px;line-height:16px;color:#8b9dac;font-weight:400;transform:scaleX(1.0513);transform-origin:0 0;">Zone:</div><div class="t" style="left:69.80px;top:179.00px;font-size:16px;line-height:16px;color:#f0c000;font-weight:400;transform:scaleX(1.0426);transform-origin:0 0;">Zone 13</div><svg style="position:absolute;left:135.4px;top:177px;" width="12" height="16" viewBox="0 0 12 16"><path d="M2.5 6.4 L6 3.2 L9.5 6.4 M2.5 9.6 L6 12.8 L9.5 9.6" stroke="#f0c000" stroke-width="1.3" fill="none" stroke-linecap="round" stroke-linejoin="round"/></svg><div class="t" style="left:286.30px;top:179.00px;font-size:16px;line-height:16px;color:#8b9dac;font-weight:400;transform:scaleX(1.0149);transform-origin:0 0;">File:</div><div class="t" style="left:324.40px;top:179.00px;font-size:16px;line-height:16px;color:#f0c000;font-weight:400;transform:scaleX(1.0853);transform-origin:0 0;">MiniSquare60.aif</div><svg style="position:absolute;left:462.2px;top:181px;" width="12" height="10" viewBox="0 0 12 10"><path d="M2.5 3.0 L6 7.0 L9.5 3.0" stroke="#8b9dac" stroke-width="1.35" fill="none" stroke-linecap="round" stroke-linejoin="round"/></svg><div style="position:absolute;left:620.90px;top:167.90px;width:225.40px;height:31.90px;background:#04304d;border-radius:4px;"></div><div class="t" style="left:631.20px;top:179.00px;font-size:16px;line-height:16px;color:#8b9dac;font-weight:400;transform:scaleX(1.0155);transform-origin:0 0;">Play:</div><div style="position:absolute;left:671.70px;top:172.80px;width:84.80px;height:23.40px;background:#064a75;border-radius:3px;"></div><div class="t" style="left:677.30px;top:179.00px;font-size:16px;line-height:16px;color:#97b1c4;font-weight:400;transform:scaleX(1.0621);transform-origin:0 0;">One Shot</div><div style="position:absolute;left:758.30px;top:172.80px;width:84.70px;height:23.40px;background:#064a75;border-radius:3px;"></div><div class="t" style="left:769.40px;top:179.00px;font-size:16px;line-height:16px;color:#97b1c4;font-weight:400;transform:scaleX(1.0252);transform-origin:0 0;">Reverse</div><div style="position:absolute;left:851.70px;top:167.90px;width:261.80px;height:31.90px;background:#04304d;border-radius:4px;"></div><div style="position:absolute;left:855.00px;top:172.80px;width:27.60px;height:23.40px;background:#064a75;border-radius:3px;"></div><svg style="position:absolute;left:855px;top:173px;" width="28" height="24" viewBox="0 0 28 24"><path d="M5.4 5.7 V17.1 M24 5.7 V17.1 M5.4 5.7 C12 7.5 17.5 15.5 24 17.1 M5.4 17.1 C12 15.5 17.5 7.5 24 5.7" stroke="#8fb0c6" stroke-width="1.1" fill="none"/><path d="M7.2 11.5 H10 M19.4 11.5 H22.2" stroke="#8fb0c6" stroke-width="0.9"/><path d="M9.2 10.2 L11.2 11.5 L9.2 12.8 Z M20.2 10.2 L18.2 11.5 L20.2 12.8 Z" fill="#8fb0c6"/></svg><div style="position:absolute;left:888.40px;top:172.80px;width:119.30px;height:23.40px;background:#064a75;border-radius:3px;"></div><div class="t" style="left:894.20px;top:179.00px;font-size:16px;line-height:16px;color:#97b1c4;font-weight:400;transform:scaleX(1.0823);transform-origin:0 0;">Follow Tempo</div><div class="t" style="left:1015.30px;top:179.00px;font-size:16px;line-height:16px;color:#8b9dac;font-weight:400;transform:scaleX(1.0513);transform-origin:0 0;">Speed:</div><div style="position:absolute;left:4.20px;top:206.00px;width:1109.30px;height:67.50px;background:#04304d;border-radius:4px;"></div><div style="position:absolute;left:4.20px;top:239.50px;width:1109.30px;height:1.10px;background:#064672;border-radius:0px;"></div><div class="t" style="left:20.40px;top:217.00px;font-size:16px;line-height:16px;color:#8b9dac;font-weight:400;transform:scaleX(1.0789);transform-origin:0 0;">Sample Start:</div><div class="t" style="left:128.50px;top:217.00px;font-size:16px;line-height:16px;color:#f0c000;font-weight:400;transform:scaleX(1.0674);transform-origin:0 0;">0</div><div class="t" style="left:286.30px;top:217.00px;font-size:16px;line-height:16px;color:#8b9dac;font-weight:400;transform:scaleX(1.0091);transform-origin:0 0;">End:</div><div class="t" style="left:325.00px;top:217.00px;font-size:16px;line-height:16px;color:#f0c000;font-weight:400;transform:scaleX(1.1348);transform-origin:0 0;">44973</div><div class="t" style="left:488.70px;top:217.00px;font-size:16px;line-height:16px;color:#8b9dac;font-weight:400;transform:scaleX(1.0637);transform-origin:0 0;">Length:</div><div class="t" style="left:551.10px;top:217.00px;font-size:16px;line-height:16px;color:#f0c000;font-weight:400;transform:scaleX(1.1258);transform-origin:0 0;">44973</div><div class="t" style="left:711.90px;top:217.00px;font-size:16px;line-height:16px;color:#8b9dac;font-weight:400;transform:scaleX(1.0239);transform-origin:0 0;">Fade In:</div><div class="t" style="left:777.10px;top:217.00px;font-size:16px;line-height:16px;color:#f0c000;font-weight:400;transform:scaleX(1.0562);transform-origin:0 0;">0</div><div class="t" style="left:964.70px;top:217.00px;font-size:16px;line-height:16px;color:#8b9dac;font-weight:400;transform:scaleX(1.0443);transform-origin:0 0;">Fade Out:</div><div class="t" style="left:1043.40px;top:217.00px;font-size:16px;line-height:16px;color:#f0c000;font-weight:400;transform:scaleX(1.0787);transform-origin:0 0;">0</div><div class="t" style="left:40.50px;top:252.00px;font-size:16px;line-height:16px;color:#8b9dac;font-weight:400;transform:scaleX(1.0863);transform-origin:0 0;">Loop Start:</div><div class="t" style="left:127.70px;top:252.00px;font-size:16px;line-height:16px;color:#f0c000;font-weight:400;transform:scaleX(1.0584);transform-origin:0 0;">15579</div><div class="t" style="left:286.30px;top:252.00px;font-size:16px;line-height:16px;color:#8b9dac;font-weight:400;transform:scaleX(1.0091);transform-origin:0 0;">End:</div><div class="t" style="left:325.00px;top:252.00px;font-size:16px;line-height:16px;color:#f0c000;font-weight:400;transform:scaleX(1.1348);transform-origin:0 0;">32266</div><div class="t" style="left:488.70px;top:252.00px;font-size:16px;line-height:16px;color:#8b9dac;font-weight:400;transform:scaleX(1.0637);transform-origin:0 0;">Length:</div><div class="t" style="left:551.10px;top:252.00px;font-size:16px;line-height:16px;color:#f0c000;font-weight:400;transform:scaleX(1.0876);transform-origin:0 0;">16687</div><div class="t" style="left:725.40px;top:252.00px;font-size:16px;line-height:16px;color:#8b9dac;font-weight:400;transform:scaleX(1.0484);transform-origin:0 0;">Mode:</div><div class="t" style="left:775.60px;top:252.00px;font-size:16px;line-height:16px;color:#f0c000;font-weight:400;transform:scaleX(1.0630);transform-origin:0 0;">Forward</div><svg style="position:absolute;left:841.7px;top:250.5px;" width="12" height="16" viewBox="0 0 12 16"><path d="M2.5 6.4 L6 3.2 L9.5 6.4 M2.5 9.6 L6 12.8 L9.5 9.6" stroke="#f0c000" stroke-width="1.3" fill="none" stroke-linecap="round" stroke-linejoin="round"/></svg><div class="t" style="left:956.60px;top:252.00px;font-size:16px;line-height:16px;color:#8b9dac;font-weight:400;transform:scaleX(1.0782);transform-origin:0 0;">Crossfade:</div><div class="t" style="left:1043.40px;top:252.00px;font-size:16px;line-height:16px;color:#f0c000;font-weight:400;transform:scaleX(1.0787);transform-origin:0 0;">0</div></div>
<div style="position:absolute;left:1164.00px;top:0.00px;width:2.00px;height:764.00px;background:#ffffff;border-radius:0px;"></div>
<div style="position:absolute;left:0.00px;top:761.00px;width:1166.00px;height:3.00px;background:#ffffff;border-radius:0px;"></div>
</body></html>
